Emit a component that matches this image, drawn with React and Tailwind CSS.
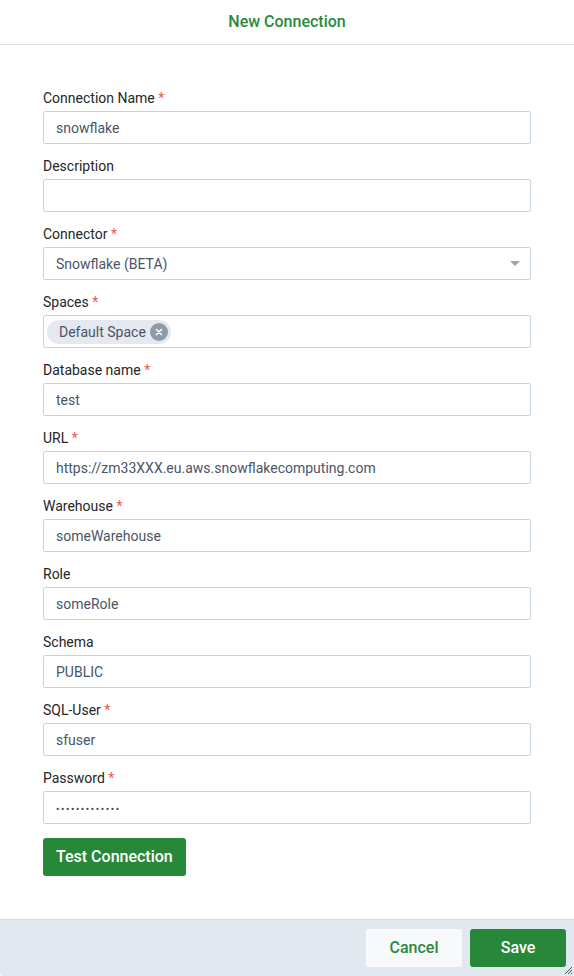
import React from "react";

const fields = [
  { label: "Connection Name", required: true, value: "snowflake" },
  { label: "Description", required: false, value: "" },
  { label: "Connector", required: true, value: "Snowflake (BETA)", type: "select" },
  { label: "Spaces", required: true, type: "tags", tags: ["Default Space"] },
  { label: "Database name", required: true, value: "test" },
  { label: "URL", required: true, value: "https://zm33XXX.eu.aws.snowflakecomputing.com" },
  { label: "Warehouse", required: true, value: "someWarehouse" },
  { label: "Role", required: false, value: "someRole" },
  { label: "Schema", required: false, value: "PUBLIC" },
  { label: "SQL-User", required: true, value: "sfuser" },
  { label: "Password", required: true, value: "•••••••••••••", type: "password" },
];

const Field = ({ field }) => {
  let control;
  if (field.type === "select") {
    control = (
      <div className="h-[33px] border border-[#c8d4e0] rounded-[2px] flex items-center justify-between pl-3 pr-2.5 text-sm text-[#4a5568]">
        <span>{field.value}</span>
        <svg width="10" height="5" viewBox="0 0 10 5">
          <path d="M0 0h10L5 5z" fill="#9aa5b4" />
        </svg>
      </div>
    );
  } else if (field.type === "tags") {
    control = (
      <div className="h-[33px] border border-[#c8d4e0] rounded-[2px] flex items-center px-[3px] text-sm text-[#4a5568]">
        {field.tags.map((t) => (
          <span
            key={t}
            className="h-6 rounded-full bg-[#e5e9ef] flex items-center pl-3 pr-[3px] gap-[4px]"
          >
            {t}
            <span className="w-[18px] h-[18px] rounded-full bg-[#8e99a9] flex items-center justify-center">
              <svg width="8" height="8" viewBox="0 0 8 8">
                <path d="M1.5 1.5l5 5M6.5 1.5l-5 5" stroke="#fff" strokeWidth="1.6" strokeLinecap="round" />
              </svg>
            </span>
          </span>
        ))}
      </div>
    );
  } else {
    control = (
      <div
        className={`h-[33px] border border-[#c8d4e0] rounded-[2px] flex items-center px-3 ${
          field.type === "password"
            ? "text-[10px] tracking-[1.6px] pt-[3px] text-[#3d4656]"
            : "text-sm text-[#4a5568]"
        }`}
      >
        {field.value}
      </div>
    );
  }

  return (
    <div className="mb-3">
      <label className="block h-5 leading-5 mb-[3px] text-sm font-normal text-[#262626]">
        {field.label}
        {field.required && <span className="text-[#f05454]"> *</span>}
      </label>
      {control}
    </div>
  );
};

export default function App() {
  return (
    <div
      className="w-[574px] h-[976px] bg-white flex flex-col rounded-[3px] overflow-hidden relative"
      style={{ fontFamily: "Roboto, 'Liberation Sans', sans-serif" }}
    >
      {/* header */}
      <div className="h-[45px] shrink-0 border-b border-[#dcdcdc] flex items-center justify-center">
        <h2 className="text-base font-medium text-[#2a8a3b] -mt-[1px]">New Connection</h2>
      </div>

      {/* form */}
      <div className="flex-1 px-[43px] pt-[43px]">
        {fields.map((f) => (
          <Field key={f.label} field={f} />
        ))}
        <button className="mt-[2px] h-[38px] px-[13px] rounded-[3px] bg-[#28883a] text-white text-base font-medium">
          Test Connection
        </button>
      </div>

      {/* footer */}
      <div className="h-[57px] shrink-0 bg-[#e2e8f0] border-t border-[#d5dbe3] flex items-center justify-end gap-2 pr-2">
        <button className="w-24 h-[38px] rounded-[3px] bg-[#f7f9fb] text-[#2a8a3b] text-base font-medium">
          Cancel
        </button>
        <button className="w-24 h-[38px] rounded-[3px] bg-[#28883a] text-white text-base font-medium">
          Save
        </button>
      </div>

      {/* resize grip */}
      <svg className="absolute right-[1px] bottom-[1px]" width="10" height="10" viewBox="0 0 10 10">
        <path d="M9 2L2 9M9 5L5 9M9 8L8 9" stroke="#555" strokeWidth="1" />
      </svg>
    </div>
  );
}
